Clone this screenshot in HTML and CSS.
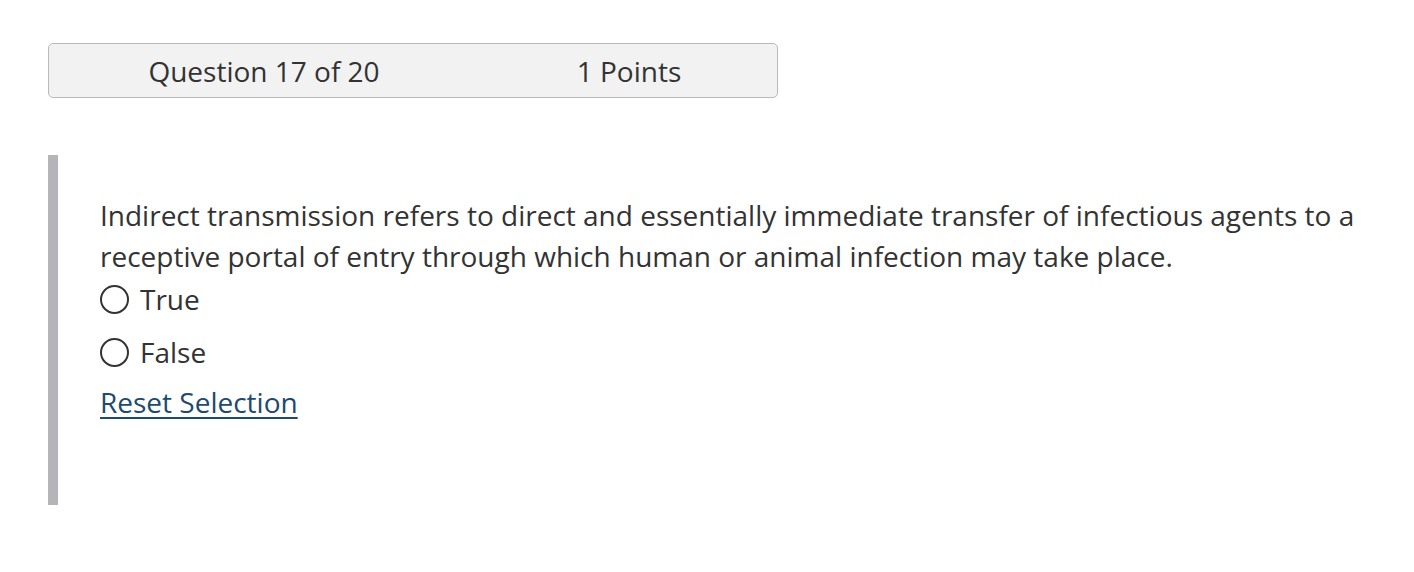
FILE: index.html
```html
<!DOCTYPE html>
<html>
<head>
<meta charset="utf-8">
<link rel="stylesheet" href="styles.css">
</head>
<body>
<div class="page">
  <div class="header">
    <div class="cell cell-q">Question 17 of 20</div>
    <div class="cell cell-p">1 Points</div>
  </div>
  <div class="question">
    <p class="prompt">Indirect transmission refers to direct and essentially immediate transfer of infectious agents to a receptive portal of entry through which human or animal infection may take place.</p>
    <label class="option"><span class="radio"></span><span>True</span></label>
    <label class="option"><span class="radio"></span><span>False</span></label>
    <a class="reset" href="#">Reset Selection</a>
  </div>
</div>
</body>
</html>
```
FILE: styles.css
```css
html, body {
  margin: 0;
  padding: 0;
  background: #ffffff;
}
body {
  font-family: "Open Sans", "Liberation Sans", sans-serif;
  color: #333333;
}
.page {
  padding: 43px 0 0 48px;
}
.header {
  display: grid;
  grid-template-columns: 430px 300px;
  width: 730px;
  height: 55px;
  box-sizing: border-box;
  background: #f2f2f2;
  border: 1px solid #b9b9b9;
  border-radius: 5px;
  align-items: center;
  font-size: 28px;
}
.cell {
  text-align: center;
  line-height: 55px;
}
.question {
  margin-top: 57px;
  border-left: 10px solid #b5b5b9;
  height: 350px;
  box-sizing: border-box;
  padding: 40px 0 0 42px;
  font-size: 28px;
}
.prompt {
  margin: 0;
  line-height: 41px;
  max-width: 1270px;
}
.option {
  display: flex;
  align-items: center;
  gap: 11px;
  height: 44px;
  margin-bottom: 9px;
  line-height: 44px;
}
.radio {
  width: 29px;
  height: 29px;
  box-sizing: border-box;
  border: 2px solid #333333;
  border-radius: 50%;
  flex: none;
}
.reset {
  display: inline-block;
  color: #1d4a70;
  text-decoration: underline;
  text-decoration-thickness: 2px;
  text-underline-offset: 4px;
  line-height: 40px;
  margin-top: -4px;
}
```
